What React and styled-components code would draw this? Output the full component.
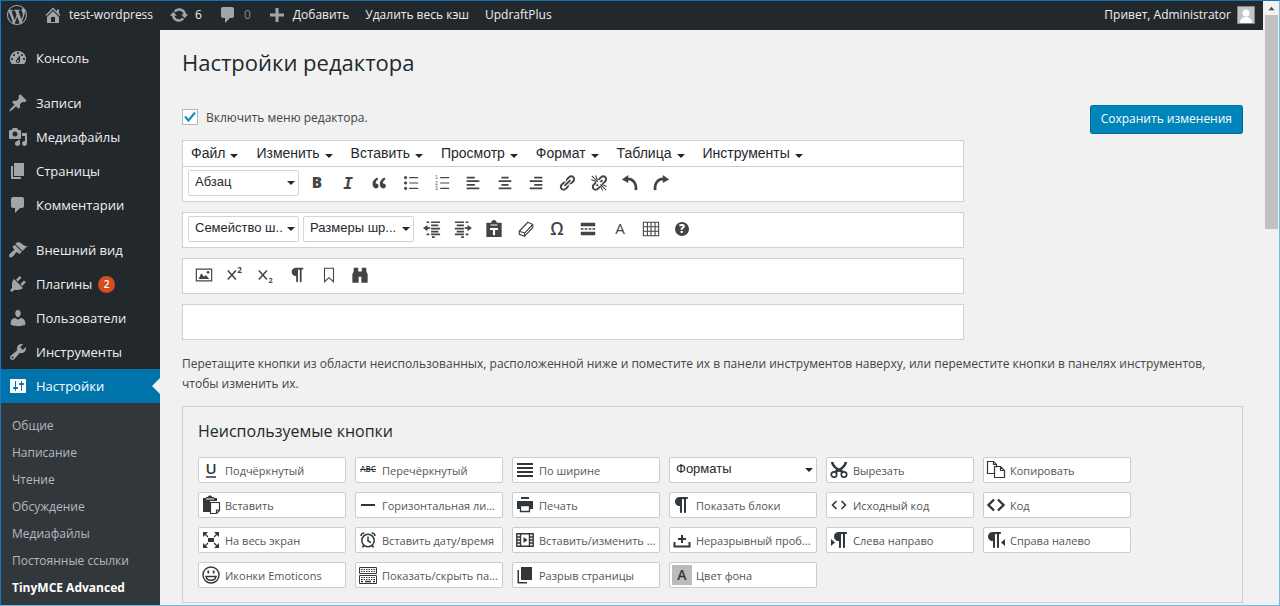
import React from "react";
import styled, { createGlobalStyle, css } from "styled-components";

const GlobalStyle = createGlobalStyle`
  * {
    box-sizing: border-box;
  }
  body {
    margin: 0;
    background: #f1f1f1;
    color: #444;
    font-family: "Open Sans", "Noto Sans", sans-serif;
    font-size: 12px;
  }
  button, select, input {
    font-family: inherit;
    margin: 0;
    padding: 0;
  }
  a {
    color: inherit;
    text-decoration: none;
  }
  ul {
    list-style: none;
    margin: 0;
    padding: 0;
  }
  svg {
    display: block;
    flex: none;
    overflow: visible;
  }
`;

const Window = styled.div`
  display: flex;
  min-height: 100vh;
  border: 1px solid #6fbcec;
  border-top-color: #1a6fae;
  border-left-color: #1a7abf;
`;

const Screen = styled.div`
  flex: 1;
  min-width: 0;
  display: flex;
  flex-direction: column;
`;

const AdminBar = styled.header`
  display: flex;
  justify-content: space-between;
  height: 29px;
  padding: 0 8px 2px 6px;
  background: #23282d;
  color: #eee;
  font-size: 12px;
`;

const BarGroup = styled.nav`
  display: flex;
  gap: 16px;
`;

const BarLink = styled.a`
  display: flex;
  align-items: center;
  gap: 6px;
  color: ${(p) => (p.$dim ? "#82878c" : "#eee")};

  svg {
    color: #a0a5aa;
  }
`;

const Avatar = styled.svg`
  background: #c3c4c7;
  border: 1px solid #82878c;
`;

const Body = styled.div`
  flex: 1;
  display: flex;
`;

const Sidebar = styled.nav`
  width: 159px;
  flex: none;
  display: flex;
  flex-direction: column;
  background: #23282d;
`;

const MenuGroup = styled.ul`
  padding-top: 11px;
`;

const MenuLink = styled.a`
  display: flex;
  align-items: center;
  gap: 8px;
  height: 34px;
  padding-left: 7px;
  color: #eee;
  font-size: 13px;

  svg {
    color: #a0a5aa;
  }

  ${(p) =>
    p.$current &&
    css`
      background: #0073aa;
      color: #fff;

      svg {
        color: #fff;
      }

      &::after {
        content: "";
        margin-left: auto;
        border: 8px solid transparent;
        border-left: none;
        border-right-color: #f1f1f1;
      }
    `}
`;

const Count = styled.span`
  width: 17px;
  height: 17px;
  margin-left: -2px;
  border-radius: 50%;
  background: #d54e21;
  color: #fff;
  font-size: 10px;
  font-weight: 600;
  line-height: 17px;
  text-align: center;
`;

const Submenu = styled.ul`
  flex: 1;
  padding-top: 9px;
  background: #32373c;
`;

const SubLink = styled.a`
  display: block;
  padding-left: 11px;
  color: ${(p) => (p.$current ? "#fff" : "#b4b9be")};
  font-size: 12px;
  font-weight: ${(p) => (p.$current ? 700 : 400)};
  line-height: 27px;
`;

const Main = styled.main`
  flex: 1;
  min-width: 0;
  padding: 17px 20px 0 22px;
`;

const Title = styled.h1`
  margin: 0;
  color: #23282d;
  font-size: 22px;
  font-weight: 400;
  line-height: 30px;
`;

const Settings = styled.form`
  display: flex;
  justify-content: space-between;
  align-items: flex-start;
  padding-top: 28px;
`;

const SaveButton = styled.button`
  height: 29px;
  padding: 0 10px 2px;
  border: 1px solid #006799;
  border-color: #0073aa #006799 #006799;
  border-radius: 3px;
  background: #0085ba;
  color: #fff;
  font-size: 12px;
`;

const Editor = styled.div`
  flex: 0 1 782px;
  min-width: 0;
  display: flex;
  flex-direction: column;
  gap: 10px;
`;

const Toggle = styled.label`
  display: flex;
  align-items: center;
  gap: 8px;
  height: 25px;
  padding-bottom: 1px;
  font-size: 12px;
`;

const Tick = styled.span`
  display: grid;

  > * {
    grid-area: 1 / 1;
  }
  input {
    appearance: none;
    width: 16px;
    height: 16px;
    border: 1px solid #b4b9be;
    background: #fff;
  }
  svg {
    color: #1e8cbe;
    pointer-events: none;
  }
`;

const Toolbar = styled.div`
  border: 1px solid #d0d0d0;
  background: #fff;
`;

const MenuBar = styled.div`
  display: flex;
  gap: 18px;
  height: 26px;
  padding: 0 0 2px 8px;
  border-bottom: 1px solid #d0d0d0;
`;

const Caret = styled.span`
  width: 8px;
  border: 4px solid transparent;
  border-top-color: #23282d;
  border-bottom: none;
  pointer-events: none;
`;

const MenuButton = styled.button`
  display: flex;
  align-items: center;
  gap: 5px;
  border: none;
  background: none;
  color: #23282d;
  font-family: "Liberation Sans", Arial, sans-serif;
  font-size: 14px;

  ${Caret} {
    margin-top: 6px;
  }
`;

const ToolRow = styled.div`
  display: flex;
  height: 34px;
  padding: 3px 0 0 5px;
`;

const SelectBox = styled.span`
  display: grid;
  align-items: center;
  width: 111px;
  height: 26px;
  margin-right: 2px;

  & + & {
    margin-left: 2px;
  }
  > * {
    grid-area: 1 / 1;
  }
  select {
    appearance: none;
    width: 100%;
    height: 100%;
    padding: 0 0 4px 6px;
    border: 1px solid #d5d5d5;
    border-radius: 2px;
    background: #fff;
    color: #23282d;
    font-family: "Liberation Sans", Arial, sans-serif;
    font-size: 13px;
  }
  ${Caret} {
    justify-self: end;
    margin-right: 4px;
  }
`;

const Tools = styled.div`
  display: grid;
  grid-auto-flow: column;
  grid-auto-columns: 1fr;
  width: ${(p) => (p.$count * 94) / 3}px;
  height: 26px;
`;

const Tool = styled.button`
  display: grid;
  place-items: center;
  border: none;
  background: none;
  color: #444;
`;

const Hint = styled.p`
  margin: 0;
  padding: 14px 0 12px;
  font-size: 12px;
  line-height: 20px;
`;

const Unused = styled.section`
  padding: 14px 15px 14px;
  border: 1px solid #d0d0d0;
`;

const SubTitle = styled.h2`
  margin: 0 0 16px;
  color: #23282d;
  font-size: 16px;
  font-weight: 500;
  line-height: 20px;
`;

const Palette = styled.div`
  display: flex;
  flex-wrap: wrap;
  gap: 9px;

  ${SelectBox} {
    width: 148px;
    margin: 0;
  }
  select {
    border-color: #ccc;
  }
`;

const PaletteButton = styled.button`
  display: flex;
  align-items: center;
  gap: 4px;
  width: 148px;
  height: 26px;
  padding-left: 2px;
  border: 1px solid #ccc;
  border-radius: 2px;
  background: #fff;
  color: #555;
  font-size: 11px;
  white-space: nowrap;

  svg {
    color: #32373c;
  }
`;

const Scrollbar = styled.div`
  display: flex;
  flex-direction: column;
  align-items: center;
  flex: none;
  width: 16px;
  padding-left: 1px;
  background: #f1f1f1;
`;

const ScrollArrow = styled.button`
  display: grid;
  place-items: center;
  width: 100%;
  height: 14px;
  border: none;
  background: none;
  color: #505050;
`;

const Thumb = styled.div`
  width: 13px;
  height: 214px;
  background: #c1c1c1;
`;

// 20x20 glyph paths
const paths = {
  wordpress:
    "M20 10c0-5.51-4.49-10-10-10C4.48 0 0 4.49 0 10c0 5.52 4.48 10 10 10 5.51 0 10-4.48 10-10zM7.78 15.37L4.37 6.22c.55-.02 1.17-.08 1.17-.08.5-.06.44-1.13-.06-1.11 0 0-1.45.11-2.37.11-.18 0-.37 0-.58-.01C4.12 2.69 6.87 1.11 10 1.11c2.33 0 4.45.87 6.05 2.34-.68-.11-1.65.39-1.65 1.58 0 .74.45 1.36.9 2.1.35.61.55 1.36.55 2.46 0 1.49-1.4 5-1.4 5l-3.03-8.37c.54-.02.82-.17.82-.17.5-.05.44-1.25-.06-1.22 0 0-1.44.12-2.38.12-.87 0-2.33-.12-2.33-.12-.5-.03-.56 1.2-.06 1.22l.92.08 1.26 3.41zM17.41 10c.24-.64.74-1.87.43-4.25.7 1.29 1.05 2.71 1.05 4.25 0 3.29-1.73 6.24-4.4 7.78.97-2.59 1.94-5.2 2.92-7.78zM6.1 18.09C3.12 16.65 1.11 13.53 1.11 10c0-1.3.23-2.48.72-3.59C3.25 10.3 4.67 14.2 6.1 18.09zm4.03-6.63l2.58 6.98c-.86.29-1.76.45-2.71.45-.79 0-1.57-.11-2.29-.33.81-2.38 1.62-4.74 2.42-7.1z",
  home: "M16 8.5l1.53 1.53-1.06 1.06L10 4.6l-6.47 6.5-1.06-1.07L10 2.5l4 4v-2h2v4zm-6-2.46l6 5.99V18H4v-5.97zM12 17v-5H8v5h4z",
  update:
    "M10.2 3.28c3.53 0 6.43 2.61 6.92 6h2.08l-3.5 4-3.5-4h2.32c-.45-1.97-2.21-3.45-4.32-3.45-1.45 0-2.73.71-3.54 1.78L4.95 5.66C6.23 4.2 8.11 3.28 10.2 3.28zm-.4 13.44c-3.52 0-6.43-2.61-6.92-6H.8l3.5-4c1.17 1.33 2.33 2.67 3.5 4H5.48c.45 1.97 2.21 3.45 4.32 3.45 1.45 0 2.73-.71 3.54-1.78l1.71 1.95c-1.28 1.46-3.15 2.38-5.25 2.38z",
  comments:
    "M5 2h9c1.1 0 2 .9 2 2v7c0 1.1-.9 2-2 2h-2l-5 5v-5H5c-1.1 0-2-.9-2-2V4c0-1.1.9-2 2-2z",
  plus: "M8.500 3h3v5.500H17v3h-5.500V17h-3v-5.500H3v-3h5.500z",
  dashboard:
    "M3.76 16h12.48A7.998 7.998 0 0 0 10 3a7.998 7.998 0 0 0-6.24 13zM10 4c.55 0 1 .45 1 1s-.45 1-1 1-1-.45-1-1 .45-1 1-1zM6 6c.55 0 1 .45 1 1s-.45 1-1 1-1-.45-1-1 .45-1 1-1zm8 0c.55 0 1 .45 1 1s-.45 1-1 1-1-.45-1-1 .45-1 1-1zm-5.37 5.55L12 7v6c0 1.1-.9 2-2 2s-2-.9-2-2c0-.57.24-1.08.63-1.45zM4 10c.55 0 1 .45 1 1s-.45 1-1 1-1-.45-1-1 .45-1 1-1zm12 0c.55 0 1 .45 1 1s-.45 1-1 1-1-.45-1-1 .45-1 1-1zM10 12a1 1 0 1 0 0 2 1 1 0 0 0 0-2z",
  post: "M10.44 3.02l1.82-1.82 6.36 6.35-1.83 1.82c-1.05-.68-2.48-.57-3.41.36l-.75.75c-.92.93-1.04 2.35-.35 3.41l-1.83 1.82-2.41-2.41-2.8 2.79c-.42.42-3.38 2.71-3.8 2.29s1.86-3.39 2.28-3.81l2.79-2.79L4.1 9.36l1.83-1.82c1.05.69 2.48.57 3.4-.36l.75-.75c.93-.92 1.05-2.35.36-3.41z",
  media:
    "M13 11V4c0-.55-.45-1-1-1h-1.67L9 1H5L3.67 3H2c-.55 0-1 .45-1 1v7c0 .55.45 1 1 1h10c.55 0 1-.45 1-1zM7 4.5c1.38 0 2.5 1.12 2.5 2.5S8.38 9.5 7 9.5 4.5 8.38 4.5 7 5.62 4.5 7 4.5zM14 6h5v10.5c0 1.38-1.12 2.5-2.5 2.5S14 17.88 14 16.5s1.12-2.5 2.5-2.5c.17 0 .34.02.5.05V9h-3V6zm-4 8.05V13h2v3.5c0 1.38-1.12 2.5-2.5 2.5S7 17.88 7 16.5 8.12 14 9.5 14c.17 0 .34.02.5.05z",
  page: "M6 15V2h10v13H6zm-1 1h8v2H3V5h2v11z",
  appearance:
    "M14.48 11.06L7.41 3.99l1.5-1.5c.5-.56 2.3-.47 3.51.32 1.21.8 1.43 1.28 2.91 2.1 1.18.64 2.45 1.26 4.45.85zm-.71.71L6.7 4.7 4.93 6.47c-.39.39-.39 1.02 0 1.41l1.06 1.06c.39.39.39 1.03 0 1.42-.6.6-1.43 1.11-2.21 1.69-.35.26-.7.53-1.01.84C1.43 14.23.4 16.08 1.4 17.07c.99 1 2.84-.03 4.18-1.36.31-.31.58-.66.85-1.02.57-.78 1.08-1.61 1.69-2.21.39-.39 1.02-.39 1.41 0l1.06 1.06c.39.39 1.02.39 1.41 0z",
  plugins:
    "M13.11 4.36L9.87 7.6 8 5.73l3.24-3.24c.35-.34 1.05-.2 1.56.32.52.51.66 1.21.31 1.55zm-8 1.77l.91-1.12 9.01 9.01-1.19.84c-.71.71-2.63 1.16-3.82 1.16H6.14L4.9 17.26c-.59.59-1.54.59-2.12 0-.59-.58-.59-1.53 0-2.12l1.24-1.24v-3.88c0-1.13.4-3.19 1.09-3.89zm7.26 3.97l3.24-3.24c.34-.35 1.04-.21 1.55.31.52.51.66 1.21.31 1.55l-3.24 3.25z",
  users:
    "M10 9.25c-2.27 0-2.73-3.44-2.73-3.44C7 4.02 7.82 2 9.97 2c2.16 0 2.98 2.02 2.71 3.81 0 0-.41 3.44-2.68 3.44zm0 2.57L12.72 10c2.39 0 4.52 2.33 4.52 4.53v2.49s-3.65 1.13-7.24 1.13c-3.65 0-7.24-1.13-7.24-1.13v-2.49c0-2.25 1.94-4.48 4.47-4.48z",
  tools:
    "M16.68 9.77c-1.34 1.34-3.3 1.67-4.95.99l-5.41 6.52c-.99.99-2.59.99-3.58 0s-.99-2.59 0-3.57l6.52-5.42c-.68-1.65-.35-3.61.99-4.95 1.28-1.28 3.12-1.62 4.72-1.06l-2.89 2.89 2.82 2.82 2.86-2.87c.53 1.58.18 3.39-1.08 4.65zM3.81 16.21c.4.39 1.04.39 1.43 0 .4-.4.4-1.04 0-1.43-.39-.4-1.03-.4-1.43 0-.39.39-.39 1.03 0 1.43z",
  settings:
    "M18 16V4c0-.55-.45-1-1-1H3c-.55 0-1 .45-1 1v12c0 .55.45 1 1 1h14c.55 0 1-.45 1-1zM8 11h1c.55 0 1 .45 1 1s-.45 1-1 1H8v1.5c0 .28-.22.5-.5.5s-.5-.22-.5-.5V13H6c-.55 0-1-.45-1-1s.45-1 1-1h1V5.5c0-.28.22-.5.5-.5s.5.22.5.5V11zm5-2h-1c-.55 0-1-.45-1-1s.45-1 1-1h1V5.5c0-.28.22-.5.5-.5s.5.22.5.5V7h1c.55 0 1 .45 1 1s-.45 1-1 1h-1v5.5c0 .28-.22.5-.5.5s-.5-.22-.5-.5V9z",
  quote:
    "M9.49 13.22c0-.74-.2-1.38-.61-1.9-.62-.78-1.83-.88-2.53-.72-.29-1.65 1.11-3.75 2.92-4.65L7.88 4c-2.73 1.3-5.42 4.28-4.96 8.05C3.21 14.43 4.59 16 6.54 16c.85 0 1.56-.25 2.12-.75s.83-1.18.83-2.03zm8.05 0c0-.74-.2-1.38-.61-1.9-.63-.78-1.83-.88-2.53-.72-.29-1.65 1.11-3.75 2.92-4.65L15.93 4c-2.73 1.3-5.41 4.28-4.95 8.05.29 2.38 1.66 3.95 3.61 3.95.85 0 1.56-.25 2.12-.75s.83-1.18.83-2.03z",
  left: "M12 5V3H3v2h9zm5 4V7H3v2h14zm-5 4v-2H3v2h9zm5 4v-2H3v2h14z",
  center: "M14 5V3H6v2h8zm3 4V7H3v2h14zm-3 4v-2H6v2h8zm3 4v-2H3v2h14z",
  right: "M17 5V3H8v2h9zm0 4V7H3v2h14zm0 4v-2H8v2h9zm0 4v-2H3v2h14z",
  justify: "M2 3h16v2H2zm0 4h16v2H2zm0 4h16v2H2zm0 4h16v2H2z",
  link: "M17.74 2.76c1.68 1.69 1.68 4.41 0 6.1l-1.53 1.52c-1.12 1.12-2.7 1.47-4.14 1.09l2.62-2.61.76-.77.76-.76c.84-.84.84-2.2 0-3.04-.84-.85-2.2-.85-3.04 0l-.77.76-3.38 3.38c-.37-1.44-.02-3.02 1.1-4.14l1.52-1.53c1.69-1.68 4.42-1.68 6.1 0zM8.59 13.43l5.34-5.34c.42-.42.42-1.1 0-1.52-.44-.43-1.13-.39-1.53 0l-5.33 5.34c-.42.42-.42 1.1 0 1.52.44.43 1.13.39 1.52 0zm-.76 2.29l4.14-4.15c.38 1.44.03 3.02-1.09 4.14l-1.52 1.53c-1.69 1.68-4.41 1.68-6.1 0-1.68-1.68-1.68-4.42 0-6.1l1.53-1.52c1.12-1.12 2.7-1.47 4.14-1.1l-4.14 4.15c-.85.84-.85 2.2 0 3.05.84.84 2.2.84 3.04 0z",
  pilcrow:
    "M15 2H7.54c-.83 0-1.59.2-2.28.6-.7.41-1.25.96-1.65 1.65C3.2 4.94 3 5.7 3 6.52s.2 1.58.61 2.27c.4.69.95 1.24 1.65 1.64.69.41 1.45.61 2.28.61h.43V17c0 .27.1.51.29.71.2.19.44.29.71.29.28 0 .51-.1.71-.29.2-.2.3-.44.3-.71V5c0-.27.09-.51.29-.71.2-.19.44-.29.71-.29s.51.1.71.29c.19.2.29.44.29.71v12c0 .27.1.51.3.71.2.19.43.29.71.29.27 0 .51-.1.71-.29.19-.2.29-.44.29-.71V4H15c.27 0 .5-.1.7-.3.2-.19.3-.43.3-.7s-.1-.51-.3-.71C15.5 2.1 15.27 2 15 2z",
  hr: "M3 9h14v2H3z",
  caretUp: "M10 5l9 10H1z",
};

const Letter = (props) => (
  <text
    fill="currentColor"
    stroke="none"
    textAnchor="middle"
    fontFamily="Open Sans, Noto Sans, sans-serif"
    {...props}
  />
);

const Digit = (props) => (
  <Letter x="4" fontSize="5" fontFamily="Liberation Sans, sans-serif" {...props} />
);

// glyphs that need more than one filled path
const drawings = {
  bold: (
    <Letter x="10" y="16" fontSize="17" fontWeight="800">
      B
    </Letter>
  ),
  italic: (
    <Letter
      x="10"
      y="17"
      fontSize="18"
      fontWeight="700"
      fontStyle="italic"
      fontFamily="DejaVu Sans Mono, monospace"
    >
      I
    </Letter>
  ),
  bullets: (
    <g stroke="currentColor" fill="currentColor">
      <path d="M8 4h10M8 10h10M8 16h10" strokeWidth="1.200" />
      <circle cx="4" cy="4" r="1.300" />
      <circle cx="4" cy="10" r="1.300" />
      <circle cx="4" cy="16" r="1.300" />
    </g>
  ),
  numbers: (
    <g>
      <path
        d="M8 4h10M8 10h10M8 16h10"
        stroke="currentColor"
        strokeWidth="1.200"
      />
      <Digit y="6">1</Digit>
      <Digit y="12">2</Digit>
      <Digit y="18">3</Digit>
    </g>
  ),
  unlink: (
    <g>
      <path d={paths.link} fill="currentColor" />
      <path d="M4 4l12 12" stroke="#fff" strokeWidth="4" />
      <path
        d="M8.5 8.5L2 2M7 8.5L1.5 6M8.5 7L6 1.5M11.5 11.5L18 18M13 11.5l5.500 2.500M11.500 13l2.500 5.500"
        stroke="currentColor"
        strokeWidth="1.2"
      />
    </g>
  ),
  undo: (
    <g>
      <path d="M1 6l7-5v9z" fill="currentColor" />
      <path
        d="M6 5.500c7-.5 11.500 4 10.500 12.500"
        stroke="currentColor"
        strokeWidth="3"
      />
    </g>
  ),
  redo: (
    <g>
      <path d="M19 6l-7-5v9z" fill="currentColor" />
      <path
        d="M14 5.500C7 5 2.500 9.500 3.500 18"
        stroke="currentColor"
        strokeWidth="3"
      />
    </g>
  ),
  outdent: (
    <g stroke="currentColor" strokeWidth="1.900">
      <path d="M4 2.500h3M9 2.500h10M9 6h8M9 9.500h10M9 13h8M4 16h3M9 16h10M10 19h3" />
      <path d="M5 5.500v7L0 9zM5 8h3v2H5z" fill="currentColor" stroke="none" />
    </g>
  ),
  indent: (
    <g stroke="currentColor" strokeWidth="1.900">
      <path d="M1 2.500h10M13 2.500h3M3 6h8M1 9.500h10M3 13h8M1 16h10M13 16h3M8 19h3" />
      <path
        d="M15 5.500v7L20 9zM12 8h3v2h-3z"
        fill="currentColor"
        stroke="none"
      />
    </g>
  ),
  pasteText: (
    <g>
      <path
        d="M1.500 3h4l1 3h7l1-3h4v16h-17zM7 3c0-4 6-4 6 0h2l-1 2H6L5 3z"
        fill="currentColor"
      />
      <path d="M5.500 10h9M10 10v7" stroke="#fff" strokeWidth="2.400" />
    </g>
  ),
  eraser: (
    <g stroke="currentColor" strokeWidth="1.300" strokeLinejoin="round">
      <path d="M2.500 12.500l9.500-10 5.500 2.500v3.500L8.500 18l-6-2z" />
      <path d="M2.500 12.500l6 2 9-9.500M8.500 14.500V18" />
    </g>
  ),
  omega: (
    <Letter x="10" y="17" fontSize="19" fontWeight="600">
      Ω
    </Letter>
  ),
  more: (
    <path
      d="M2 3h16v4H2zM2 13h16v4H2zM2 9.200h3v1.600H2zM6.300 9.200h3v1.600h-3zM10.700 9.200h3v1.600h-3zM15 9.200h3v1.600h-3z"
      fill="currentColor"
    />
  ),
  color: (
    <Letter x="10" y="16" fontSize="17">
      A
    </Letter>
  ),
  table: (
    <path
      d="M1.500 2.500h17v15h-17zM1.500 7.500h17M1.500 12.500h17M6 2.500v15M10 2.500v15M14.500 2.500v15"
      stroke="currentColor"
      strokeWidth="1.200"
    />
  ),
  help: (
    <g>
      <circle cx="10" cy="10" r="7.800" fill="currentColor" />
      <Letter x="10" y="14.500" fontSize="13" fontWeight="800" fill="#fff">
        ?
      </Letter>
    </g>
  ),
  image: (
    <g>
      <path d="M1.500 3.500h17v13h-17z" stroke="currentColor" strokeWidth="1.300" />
      <path
        d="M4 14.500l3-6.500 3 4 2-2 4 4.500z"
        fill="currentColor"
      />
      <circle cx="14.500" cy="7" r="1.500" fill="currentColor" />
    </g>
  ),
  sup: (
    <g>
      <path
        d="M2 5l9 10M11 5L2 15"
        stroke="currentColor"
        strokeWidth="1.700"
      />
      <Letter x="15" y="8" fontSize="9" fontWeight="700">
        2
      </Letter>
    </g>
  ),
  sub: (
    <g>
      <path
        d="M2 5l9 10M11 5L2 15"
        stroke="currentColor"
        strokeWidth="1.700"
      />
      <Letter x="15" y="19" fontSize="8" fontWeight="700">
        2
      </Letter>
    </g>
  ),
  bookmark: (
    <path
      d="M5 2.500h10v15L10 13l-5 4.500z"
      stroke="currentColor"
      strokeWidth="1.200"
    />
  ),
  binoculars: (
    <path
      d="M3 2h5v4h4V2h5v4l1.500 3v9.500h-7V12h-3v6.500h-7V9L3 6z"
      fill="currentColor"
    />
  ),
  underline: (
    <g>
      <Letter x="10" y="14" fontSize="15" fontWeight="600">
        U
      </Letter>
      <path d="M5 17h10" stroke="currentColor" strokeWidth="1.500" />
    </g>
  ),
  strike: (
    <g>
      <Letter x="10" y="12" fontSize="8" fontWeight="600">
        ABC
      </Letter>
      <path d="M2 9.500h16" stroke="currentColor" />
    </g>
  ),
  cut: (
    <g stroke="currentColor" strokeWidth="1.700">
      <path d="M3 2c1 4 3 6 7 8l4 2M17 2c-1 4-3 6-7 8l-4 2" strokeWidth="2.600" />
      <circle cx="5" cy="14.500" r="2.700" />
      <circle cx="15" cy="14.500" r="2.700" />
    </g>
  ),
  copy: (
    <g stroke="currentColor" strokeWidth="1.200">
      <path d="M8 13.500H1.500v-12h6l3 3v3" />
      <path d="M7.500 1.500v3h3" />
      <path d="M8.500 6.500h6l4 4v7h-10zM14.500 6.500v4h4" />
    </g>
  ),
  paste: (
    <g>
      <path
        d="M2 3h3V2h2c0-2 4-2 4 0h2v1h3v3H9v11H2z"
        fill="currentColor"
      />
      <path d="M5 4h8" stroke="#fff" />
      <path
        d="M9.500 7.500h9v8l-3 3h-6zM18.500 15h-3v3.500"
        fill="#fff"
        stroke="currentColor"
        strokeWidth="1.200"
      />
    </g>
  ),
  print: (
    <g>
      <path
        d="M6 2h8v2H6zM2 6h16v8h-3v-4H5v4H2z"
        fill="currentColor"
      />
      <path d="M5.500 10.500h9v6h-9z" stroke="currentColor" strokeWidth="1.300" />
    </g>
  ),
  source: (
    <path
      d="M7.500 6L3.500 10l4 4M12.500 6l4 4-4 4"
      stroke="currentColor"
      strokeWidth="1.600"
    />
  ),
  code: (
    <path
      d="M8 4.500L2.500 10 8 15.500M12 4.500l5.500 5.500-5.500 5.500"
      stroke="currentColor"
      strokeWidth="2.400"
    />
  ),
  fullscreen: (
    <g fill="currentColor">
      <path d="M2 2h5L2 7zM18 2v5l-5-5zM2 18v-5l5 5zM18 18h-5l5-5zM7 8h6v4H7z" />
      <path
        d="M3 3l4 4M17 3l-4 4M3 17l4-4M17 17l-4-4"
        stroke="currentColor"
        strokeWidth="1.300"
      />
    </g>
  ),
  clock: (
    <g stroke="currentColor" strokeWidth="1.500">
      <circle cx="10" cy="10.500" r="6.200" />
      <path d="M10 6.500V11l3 1.500M3 6c.2-2 1.500-3 3.300-3M17 6c-.2-2-1.500-3-3.300-3M6 15l-1.500 2.500M14 15l1.500 2.500" />
    </g>
  ),
  video: (
    <g>
      <path
        d="M1.800 3.800h16.400v12.400H1.800zM5.500 4v12M14.500 4v12M2 7h3M2 10h3M2 13h3M15 7h3M15 10h3M15 13h3"
        stroke="currentColor"
        strokeWidth="1.400"
      />
      <path d="M8.500 7l4 3-4 3z" fill="currentColor" />
    </g>
  ),
  nbsp: (
    <path
      d="M2.500 12v4.500h15V12M10 5v8M6 9h8"
      stroke="currentColor"
      strokeWidth="2"
    />
  ),
  ltr: (
    <g fill="currentColor">
      <path d={paths.pilcrow} transform="translate(2 0)" />
      <path d="M2 9l4 3.500L2 16z" />
    </g>
  ),
  rtl: (
    <g fill="currentColor">
      <path d={paths.pilcrow} transform="translate(-1 0)" />
      <path d="M19 9l-4 3.500 4 3.500z" />
    </g>
  ),
  smile: (
    <g stroke="currentColor" strokeWidth="1.400">
      <circle cx="10" cy="10" r="8" />
      <path d="M5 11.500c1 5 9 5 10 0z" />
      <path d="M7.300 5.500v3M12.700 5.500v3" strokeWidth="1.800" />
    </g>
  ),
  keyboard: (
    <g stroke="currentColor">
      <path d="M1.500 2.500h17v6h-17zM1.500 10.500h17v8h-17z" />
      <path d="M3 4.500h14M3 6.500h14M3 12.500h14M3 14.500h14" strokeDasharray="1.500 1" />
      <path d="M3 16.500h2M7 16.500h6M15 16.500h2" strokeWidth="1.500" />
    </g>
  ),
  pagebreak: <path d="M6 15V2h11v13H6zM4 5v12h8v1.500H2.500V5z" fill="currentColor" />,
  backcolor: (
    <g>
      <path d="M0 0h20v20H0z" fill="#b9bbbd" />
      <Letter x="10" y="15" fontSize="14" fontWeight="600">
        A
      </Letter>
    </g>
  ),
};

const Icon = ({ name, size = 20 }) => (
  <svg width={size} height={size} viewBox="0 0 20 20" fill="none" aria-hidden>
    {drawings[name] || (
      <path d={paths[name]} fill="currentColor" fillRule="evenodd" />
    )}
  </svg>
);

const menu = [
  [["dashboard", "Консоль"]],
  [
    ["post", "Записи"],
    ["media", "Медиафайлы"],
    ["page", "Страницы"],
    ["comments", "Комментарии"],
  ],
  [
    ["appearance", "Внешний вид"],
    ["plugins", "Плагины", 2],
    ["users", "Пользователи"],
    ["tools", "Инструменты"],
    ["settings", "Настройки"],
  ],
];

const submenu = [
  "Общие",
  "Написание",
  "Чтение",
  "Обсуждение",
  "Медиафайлы",
  "Постоянные ссылки",
  "TinyMCE Advanced",
];

const editorMenu = [
  "Файл",
  "Изменить",
  "Вставить",
  "Просмотр",
  "Формат",
  "Таблица",
  "Инструменты",
];

const rows = [
  {
    selects: ["Абзац"],
    tools: [
      "bold",
      "italic",
      "quote",
      "bullets",
      "numbers",
      "left",
      "center",
      "right",
      "link",
      "unlink",
      "undo",
      "redo",
    ],
  },
  {
    selects: ["Семейство ш..", "Размеры шр..."],
    tools: [
      "outdent",
      "indent",
      "pasteText",
      "eraser",
      "omega",
      "more",
      "color",
      "table",
      "help",
    ],
  },
  {
    selects: [],
    tools: ["image", "sup", "sub", "pilcrow", "bookmark", "binoculars"],
  },
  { selects: [], tools: [] },
];

const unused = [
  ["underline", "Подчёркнутый"],
  ["strike", "Перечёркнутый"],
  ["justify", "По ширине"],
  [null, "Форматы"],
  ["cut", "Вырезать"],
  ["copy", "Копировать"],
  ["paste", "Вставить"],
  ["hr", "Горизонтальная ли..."],
  ["print", "Печать"],
  ["pilcrow", "Показать блоки"],
  ["source", "Исходный код"],
  ["code", "Код"],
  ["fullscreen", "На весь экран"],
  ["clock", "Вставить дату/время"],
  ["video", "Вставить/изменить ..."],
  ["nbsp", "Неразрывный проб..."],
  ["ltr", "Слева направо"],
  ["rtl", "Справа налево"],
  ["smile", "Иконки Emoticons"],
  ["keyboard", "Показать/скрыть па..."],
  ["pagebreak", "Разрыв страницы"],
  ["backcolor", "Цвет фона"],
];

const Dropdown = ({ label }) => (
  <SelectBox>
    <select aria-label={label}>
      <option>{label}</option>
    </select>
    <Caret />
  </SelectBox>
);

const App = () => {
  return (
    <>
      <GlobalStyle />
      <Window>
        <Screen>
          <AdminBar>
            <BarGroup>
              <BarLink href="#" aria-label="WordPress">
                <Icon name="wordpress" />
              </BarLink>
              <BarLink href="#">
                <Icon name="home" />
                test-wordpress
              </BarLink>
              <BarLink href="#">
                <Icon name="update" />6
              </BarLink>
              <BarLink href="#" $dim>
                <Icon name="comments" />0
              </BarLink>
              <BarLink href="#">
                <Icon name="plus" />
                Добавить
              </BarLink>
              <BarLink href="#">Удалить весь кэш</BarLink>
              <BarLink href="#">UpdraftPlus</BarLink>
            </BarGroup>
            <BarLink href="#">
              Привет, Administrator
              <Avatar width="18" height="18" viewBox="0 0 16 16">
                <circle cx="8" cy="6" r="3.500" fill="#fff" />
                <path d="M2 16c0-8 12-8 12 0z" fill="#fff" />
              </Avatar>
            </BarLink>
          </AdminBar>
          <Body>
            <Sidebar>
              {menu.map((group, i) => (
                <MenuGroup key={i}>
                  {group.map(([icon, label, count]) => (
                    <li key={label}>
                      <MenuLink href="#" $current={icon === "settings"}>
                        <Icon name={icon} />
                        {label}
                        {count && <Count>{count}</Count>}
                      </MenuLink>
                    </li>
                  ))}
                </MenuGroup>
              ))}
              <Submenu>
                {submenu.map((label) => (
                  <li key={label}>
                    <SubLink href="#" $current={label === "TinyMCE Advanced"}>
                      {label}
                    </SubLink>
                  </li>
                ))}
              </Submenu>
            </Sidebar>
            <Main>
              <Title>Настройки редактора</Title>
              <Settings onSubmit={(e) => e.preventDefault()}>
                <Editor>
                  <Toggle>
                    <Tick>
                      <input type="checkbox" defaultChecked />
                      <svg width="16" height="16" viewBox="0 0 16 16">
                        <path
                          d="M3 7.500l3.500 4L13 3.500"
                          fill="none"
                          stroke="currentColor"
                          strokeWidth="2.200"
                        />
                      </svg>
                    </Tick>
                    Включить меню редактора.
                  </Toggle>
                  {rows.map((row, i) => (
                    <Toolbar key={i}>
                      {i === 0 && (
                        <MenuBar>
                          {editorMenu.map((label) => (
                            <MenuButton type="button" key={label}>
                              {label}
                              <Caret />
                            </MenuButton>
                          ))}
                        </MenuBar>
                      )}
                      <ToolRow>
                        {row.selects.map((label) => (
                          <Dropdown key={label} label={label} />
                        ))}
                        <Tools $count={row.tools.length}>
                          {row.tools.map((name) => (
                            <Tool type="button" key={name} aria-label={name}>
                              <Icon name={name} size={18} />
                            </Tool>
                          ))}
                        </Tools>
                      </ToolRow>
                    </Toolbar>
                  ))}
                </Editor>
                <SaveButton type="submit">Сохранить изменения</SaveButton>
              </Settings>
              <Hint>
                Перетащите кнопки из области неиспользованных, расположенной
                ниже и поместите их в панели инструментов наверху, или
                переместите кнопки в панелях инструментов, чтобы изменить их.
              </Hint>
              <Unused>
                <SubTitle>Неиспользуемые кнопки</SubTitle>
                <Palette>
                  {unused.map(([icon, label]) =>
                    icon ? (
                      <PaletteButton type="button" key={label}>
                        <Icon name={icon} />
                        {label}
                      </PaletteButton>
                    ) : (
                      <Dropdown key={label} label={label} />
                    )
                  )}
                </Palette>
              </Unused>
            </Main>
          </Body>
        </Screen>
        <Scrollbar>
          <ScrollArrow type="button" aria-label="Вверх">
            <Icon name="caretUp" size={7} />
          </ScrollArrow>
          <Thumb />
        </Scrollbar>
      </Window>
    </>
  );
};

export default App;
